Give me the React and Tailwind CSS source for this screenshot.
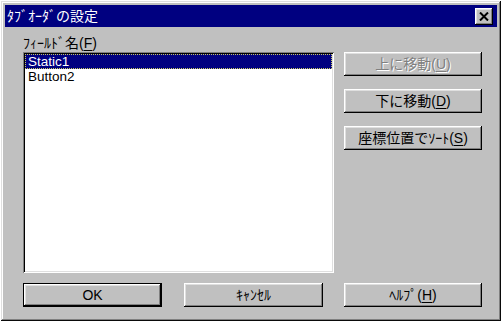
const font = "font-['Liberation_Sans','Noto_Sans_CJK_JP',sans-serif]";

const raised =
  "shadow-[inset_-1px_-1px_#000000,inset_1px_1px_#ffffff,inset_-2px_-2px_#808080,inset_2px_2px_#dfdfdf]";

const Btn = ({ children, isDefault, disabled, className = "" }) => (
  <button
    className={`h-[24px] bg-[#c0c0c0] flex items-center justify-center text-[14px] leading-none ${
      isDefault ? "border border-black" : ""
    } ${raised} ${disabled ? "text-[#808080] [text-shadow:1px_1px_#ffffff]" : "text-black"} ${className}`}
  >
    {children}
  </button>
);

const Key = ({ k }) => <span className="underline underline-offset-2">{k}</span>;

export default function App() {
  const items = ["Static1", "Button2"];

  return (
    <div className={`w-[503px] h-[324px] bg-white pt-[1px] pl-[1px] ${font}`}>
      <div className="w-[500px] h-[320px] bg-[#c0c0c0] p-[4px] flex flex-col shadow-[inset_-1px_-1px_#0a0a0a,inset_1px_1px_#dfdfdf,inset_-2px_-2px_#808080,inset_2px_2px_#ffffff]">
        {/* title bar */}
        <div className="h-[22px] bg-[#000080] flex items-center justify-between pl-[2px] pr-[4px]">
          <span className="text-white text-[14px] leading-none">ﾀﾌﾞｵｰﾀﾞの設定</span>
          <div className={`w-[18px] h-[17px] bg-[#c0c0c0] flex items-center justify-center ${raised}`}>
            <svg width="10" height="9" viewBox="0 0 10 9">
              <path d="M1 0.5 L9 8.5 M9 0.5 L1 8.5" stroke="#000" strokeWidth="2" />
            </svg>
          </div>
        </div>

        <div className="flex-1 pl-[18px] pt-[9px] flex flex-col">
          <div className="flex gap-[10px]">
            <div className="w-[311px] flex flex-col">
              <div className="h-[16px] text-[14px] leading-none text-black">
                ﾌｨｰﾙﾄﾞ名(<Key k="F" />)
              </div>
              <div className="h-[221px] bg-white p-[2px] shadow-[inset_1px_1px_#808080,inset_-1px_-1px_#ffffff,inset_2px_2px_#000000,inset_-2px_-2px_#dfdfdf]">
                {items.map((it, i) => (
                  <div
                    key={it}
                    className={`h-[15px] flex items-center pl-[2px] text-[13.5px] leading-none ${
                      i === 0
                        ? "bg-[#000080] text-white border border-dotted border-[#c8c860]"
                        : "text-black border border-transparent"
                    }`}
                  >
                    {it}
                  </div>
                ))}
              </div>
            </div>

            <div className="w-[138px] flex flex-col gap-[13px] pt-[16px]">
              <Btn disabled>
                上に移動(<Key k="U" />)
              </Btn>
              <Btn>
                下に移動(<Key k="D" />)
              </Btn>
              <Btn>
                座標位置でｿｰﾄ(<Key k="S" />)
              </Btn>
            </div>
          </div>

          <div className="flex mt-[10px]">
            <Btn isDefault className="w-[139px]">OK</Btn>
            <Btn className="w-[139px] ml-[22px]">ｷｬﾝｾﾙ</Btn>
            <Btn className="w-[138px] ml-[21px]">
              ﾍﾙﾌﾟ(<Key k="H" />)
            </Btn>
          </div>
        </div>
      </div>
    </div>
  );
}
